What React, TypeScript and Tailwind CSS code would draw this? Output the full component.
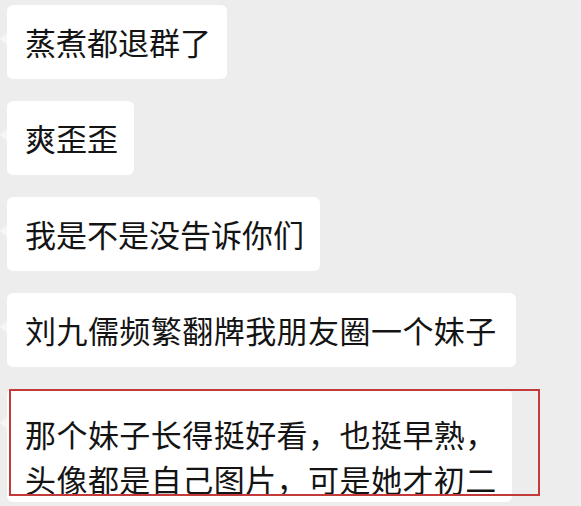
import React from "react";

const font = {
  fontFamily: '"Noto Sans CJK SC", "Noto Sans", sans-serif',
};

function Tail() {
  return (
    <span className="absolute -left-[7px] top-[28px] h-0 w-0 border-y-[6px] border-r-[7px] border-y-transparent border-r-[#f6f6f6]" />
  );
}

function Bubble({ text, wide }: { text: string; wide?: boolean }) {
  return (
    <div
      className={
        "relative h-[74px] rounded-md bg-white pl-[18px] text-[#141414] leading-[74px] " +
        (wide ? "pr-[19px] text-[31px] tracking-[0.45px]" : "pr-[16px] text-[31px]")
      }
    >
      <Tail />
      {text}
    </div>
  );
}

export default function App() {
  return (
    <div
      className="h-[506px] w-[581px] overflow-hidden bg-[#ededed] pl-[7px] pt-[5px]"
      style={font}
    >
      <div className="flex flex-col items-start gap-[22px]">
        <Bubble text="蒸煮都退群了" />
        <Bubble text="爽歪歪" />
        <Bubble text="我是不是没告诉你们" />
        <Bubble text="刘九儒频繁翻牌我朋友圈一个妹子" wide />
        <div className="relative">
          <div className="relative w-[505px] rounded-md bg-white pb-[1px] pl-[18px] pt-[22px] text-[31px] leading-[45px] tracking-[0.45px] text-[#141414]">
            <Tail />
            那个妹子长得挺好看，也挺早熟，
            <br />
            头像都是自己图片，可是她才初二
          </div>
          {/* red highlight box */}
          <div className="absolute left-[2px] top-0 h-[107px] w-[531px] border-2 border-[#c23a3a]" />
        </div>
      </div>
    </div>
  );
}
